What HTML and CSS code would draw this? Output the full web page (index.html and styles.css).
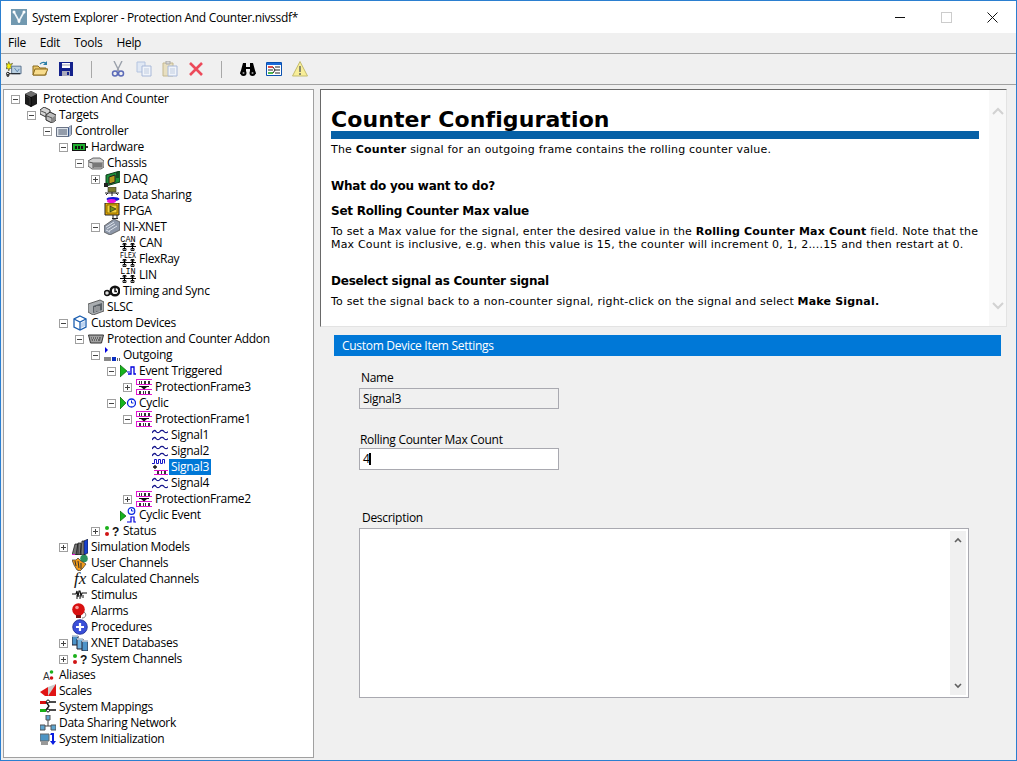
FILE: index.html
```html
<!DOCTYPE html>
<html lang="en">
<head>
    <meta charset="UTF-8" />
    <title>System Explorer - Protection And Counter.nivssdf*</title>
    <link rel="stylesheet" href="styles.css">
</head>
<body>
<svg class="defs" width="0" height="0">
    <symbol id="i-root" viewBox="0 0 16 16">
        <path d="M1 3l6-3 6 3v10l-6 3-6-3z" fill="#1c1c1c"/><path d="M1 3l6-3 6 3-6 3z" fill="#6e6e6e"/><path d="M7 6v10" stroke="#000"/><path d="M2 5l4 2v7" stroke="#3a3a3a" fill="none"/>
    </symbol>
    <symbol id="i-targets" viewBox="0 0 16 16">
        <path d="M0 3l4-3 6 3v5l-4 2-6-3z" fill="#d4d4d4" stroke="#333"/><path d="M6 8l4-3 6 3v5l-4 3-6-3z" fill="#bdbdbd" stroke="#222"/><path d="M1 4l5 2v4M7 9l5 2v5" stroke="#555" fill="none"/><path d="M12 11l4-3v5l-4 3z" fill="#888"/>
    </symbol>
    <symbol id="i-controller" viewBox="0 0 16 16">
        <path d="M.5 4.500h12l3-2v9l-3 2H.5z" fill="#dde3ea" stroke="#6a7385"/><path d="M2 7h9M2 9h9M2 11h9M4 6v6M6 6v6M8 6v6M10 6v6" stroke="#7b8494"/><path d="M12.500 4.500v9" stroke="#3d5a8a"/><path d="M13 5l2-2v8l-2 2z" fill="#a9b8d0"/>
    </symbol>
    <symbol id="i-hardware" viewBox="0 0 16 16">
        <path d="M0 4h14v8H0z" fill="#111"/><path d="M1 5h12v6H1z" fill="#1fae2f"/><path d="M3 7h2v3H3zM6 7h2v3H6zM9 7h2v3H9z" fill="#111"/><path d="M14 7h2v2h-2z" fill="#333"/>
    </symbol>
    <symbol id="i-chassis" viewBox="0 0 16 16">
        <path d="M0 6l5-3h7l4 3v6l-3 2H4l-4-3z" fill="#cfcfcf" stroke="#444" stroke-width=".8"/><path d="M5 7h10v6H5z" fill="#9b9b9b"/><path d="M1 7l4 1v5M6 9h8M6 11h8" stroke="#555" fill="none"/>
    </symbol>
    <symbol id="i-daq" viewBox="0 0 16 16">
        <path d="M2 4l14-4v11L2 15z" fill="#1c8f3a" stroke="#0b3d19"/><path d="M5 6l6-2v7l-6 2z" fill="#b89a1a" stroke="#222"/><path d="M0 12h4v4H0z" fill="#222"/><path d="M12 2h3M12 4h3M12 6h3" stroke="#111"/>
    </symbol>
    <symbol id="i-share" viewBox="0 0 16 16">
        <path d="M4 0h8v5H4z" fill="#7d7d30" stroke="#333" stroke-width=".6"/><path d="M1 6h14M8 5v4M4 6L2 8M12 6l2 2" stroke="#222"/><ellipse cx="9" cy="12" rx="6.500" ry="2" fill="#1515d8"/><ellipse cx="7.500" cy="14" rx="4.500" ry="2" fill="#ee18d6"/>
    </symbol>
    <symbol id="i-fpga" viewBox="0 0 16 16">
        <path d="M1 0h14v12H1z" fill="#e8a800" stroke="#222"/><path d="M3 2h10v8H3z" fill="#f6d23c" stroke="#8a6d00"/><path d="M6 3l6 3-6 3z" fill="#6f8f1e" stroke="#111" stroke-width=".6"/><path d="M9 12v3M13 12v3M8 15.500h6" stroke="#222"/>
    </symbol>
    <symbol id="i-xnet" viewBox="0 0 16 16">
        <path d="M0 7l10-7 6 3v8L6 16l-6-3z" fill="#8d97a8" stroke="#444" stroke-width=".7"/><path d="M2 8l8-5M3 10l8-5M5 12l8-5M2 11l4 2" stroke="#dce2ea"/>
    </symbol>
    <symbol id="i-bus" viewBox="0 0 16 8">
        <path d="M0 3.500h16M4.500 .5v6M12.500 .5v6" stroke="#000"/><path d="M3 5.500h3v2H3zM11 5.500h3v2h-3zM3 .5h3v1.500H3zM11 .5h3v1.500h-3z" fill="none" stroke="#000" stroke-width=".9"/>
    </symbol>
    <symbol id="i-timing" viewBox="0 0 16 16">
        <circle cx="3" cy="10" r="2.500" fill="#ddd" stroke="#111" stroke-width="1.500"/><circle cx="11" cy="8" r="4.300" fill="#fff" stroke="#111" stroke-width="2.400"/><path d="M11 5v3.500h2M5 11h3" stroke="#111" stroke-width="1.400" fill="none"/>
    </symbol>
    <symbol id="i-slsc" viewBox="0 0 16 16">
        <path d="M0 5l12-4 4 2v9l-11 4-5-3z" fill="#a9adb0" stroke="#444" stroke-width=".8"/><path d="M5 7l9-3v7l-9 3z" fill="#5a6066"/><path d="M7 8v5M9 7v5M11 7v5" stroke="#ccc"/>
    </symbol>
    <symbol id="i-custom" viewBox="0 0 16 16">
        <path d="M8 1l6 3v8l-6 3-6-3V4z" fill="#fff" stroke="#1c5fb0" stroke-width="1.300"/><path d="M2 4l6 3 6-3M8 7v8" fill="none" stroke="#1c5fb0" stroke-width="1.300"/><path d="M9 8l4-2v5l-4 2z" fill="#bcd3f0"/>
    </symbol>
    <symbol id="i-addon" viewBox="0 0 16 16">
        <path d="M.5 4h15l-2 8h-11z" fill="#a0a0a0" stroke="#333"/><path d="M3 6h10l-1 4H4z" fill="#666"/><path d="M4 7h1M6 7h1M8 7h1M10 7h1M5 9h1M7 9h1M9 9h1" stroke="#eee"/>
    </symbol>
    <symbol id="i-out" viewBox="0 0 16 16">
        <path d="M1 0l3 3-3 3z" fill="#0000e0"/><path d="M0 11h7M0 13h7" stroke="#111" stroke-width="1.200"/><path d="M8 10h4v4H8z" fill="#0a2fc0"/><path d="M13 11h1v3h-1zM15 11h1v3h-1z" fill="#666"/>
    </symbol>
    <symbol id="i-event" viewBox="0 0 16 16">
        <path d="M0 2l7 6-7 6z" fill="#17b41d" stroke="#0a5c0a" stroke-width=".7"/><path d="M8 11h3V4h3v7h2" fill="none" stroke="#0000dd" stroke-width="1.300"/><path d="M7 9h3" stroke="#0000dd"/>
    </symbol>
    <symbol id="i-cyclic" viewBox="0 0 16 16">
        <path d="M0 2l6 6-6 6z" fill="#17b41d" stroke="#0a5c0a" stroke-width=".7"/><circle cx="11.500" cy="8" r="4" fill="#fff" stroke="#0a28e0" stroke-width="1.300"/><path d="M11.500 5.500V8h2" fill="none" stroke="#0a28e0"/>
    </symbol>
    <symbol id="i-cyevent" viewBox="0 0 16 16">
        <path d="M0 4l6 5-6 5z" fill="#17b41d" stroke="#0a5c0a" stroke-width=".7"/><circle cx="11.500" cy="4" r="3.300" fill="#fff" stroke="#0a28e0" stroke-width="1.200"/><path d="M11.500 2v2h2" fill="none" stroke="#0a28e0"/><path d="M7 15h4v-5h3v5h2" fill="none" stroke="#0000dd" stroke-width="1.200"/>
    </symbol>
    <symbol id="i-frame" viewBox="0 0 16 16">
        <path d="M0 .5h16M0 5.500h16M0 10.500h16M0 15.500h16M.5 0v6M.5 10v6" stroke="#e014d0"/><path d="M3 2h1v3H3zM5 2h1v3H5zM8 2h2v3H8zM12 2h2v3h-2zM3 12h2v3H3zM7 12h1v3H7zM9 12h1v3H9zM12 12h2v3h-2z" fill="#333"/><path d="M5 8h6l-3 2.500z" fill="#111"/><path d="M3 7.500h10" stroke="#111"/>
    </symbol>
    <symbol id="i-signal" viewBox="0 0 16 16">
        <path d="M0 6c1.500-3 3-3 4-1.500S7 6 8 4.500 11 3 12 4.500 15 6 16 4.500M0 13c1.500-3 3-3 4-1.500S7 13 8 11.500 11 10 12 11.500 15 13 16 11.500" fill="none" stroke="#14148c" stroke-width="1.300"/>
    </symbol>
    <symbol id="i-counter" viewBox="0 0 16 16">
        <path d="M0 4.500h2.500v-4h2v4h2v-4h2v4h2v-4h2v4" fill="none" stroke="#1414c8"/><path d="M3 6v4M1 8h4" stroke="#111" stroke-width="1.300"/><path d="M2 11.500h14M2 15.500h14" stroke="#e014d0"/><path d="M5 12h2v3H5zM9 12h1v3H9zM12 12h2v3h-2z" fill="#333"/>
    </symbol>
    <symbol id="i-models" viewBox="0 0 16 16">
        <path d="M0 16l3-11h3v11zM4 16l2-12h3v12zM8 16l2-14h3v14z" fill="#777" stroke="#111" stroke-width=".7"/><path d="M12 16V2l4-2v14z" fill="#1640d0" stroke="#111" stroke-width=".6"/><path d="M0 15h3v1H0z" fill="#e014d0"/>
    </symbol>
    <symbol id="i-users" viewBox="0 0 16 16">
        <circle cx="12" cy="3.500" r="3.800" fill="#2a8f5c"/><path d="M0 5l4 0 2-2 3 3 2 1 3 2-3 4-3 3-3-1-3-5z" fill="#f09a1a" stroke="#333" stroke-width=".7"/><path d="M3 6l1 5M6 6l1 7M9 8l0 6" stroke="#333"/>
    </symbol>
    <symbol id="i-stim" viewBox="0 0 16 16">
        <path d="M0 7h4l1-3 1 6 1-6h1l1 5 1-3h5" fill="none" stroke="#111" stroke-width="1.200"/><path d="M5 8v4M8 8v4M11 8v3" stroke="#111"/>
    </symbol>
    <symbol id="i-alarm" viewBox="0 0 16 16">
        <circle cx="6.500" cy="6.500" r="6.300" fill="#d81010"/><circle cx="5" cy="4.500" r="1.800" fill="#f79a9a"/><path d="M4 12h5v3H4z" fill="#7a1010"/><path d="M12 9c3 2 2 6-2 6" fill="none" stroke="#777"/>
    </symbol>
    <symbol id="i-proc" viewBox="0 0 16 16">
        <circle cx="8" cy="8" r="7.300" fill="#3a4fd8" stroke="#1b2a90" stroke-width=".8"/><path d="M8 4v8M4 8h8" stroke="#fff" stroke-width="2.200"/>
    </symbol>
    <symbol id="i-db" viewBox="0 0 16 16">
        <path d="M0 1h6v9H0z" fill="#4c93c9" stroke="#223"/><path d="M5 4h6v10H5z" fill="#6fb2e0" stroke="#223"/><path d="M10 6h6v10h-6z" fill="#4c93c9" stroke="#223"/><path d="M0 1h6M5 4h6M10 6h6" stroke="#cde" stroke-width="1.500"/>
    </symbol>
    <symbol id="i-scale" viewBox="0 0 16 16">
        <path d="M0 9l8-5v9H5z" fill="#e01414"/><path d="M8 4l8-3v12H8z" fill="#ccc"/><path d="M8 13l8-12v12z" fill="#e01414"/>
    </symbol>
    <symbol id="i-map" viewBox="0 0 16 16">
        <path d="M0 2h6v3H0z" fill="#d81010"/><path d="M0 10h6v3H0z" fill="#18b018"/><path d="M9 3h7M9 11h7M6 3l3 4-3 4" fill="none" stroke="#111" stroke-width="1.300"/><circle cx="8" cy="2.500" r="1.500" fill="#fff" stroke="#111"/><circle cx="8" cy="11.500" r="1.500" fill="#fff" stroke="#111"/>
    </symbol>
    <symbol id="i-net" viewBox="0 0 16 16">
        <path d="M6 0h4v5H6z" fill="#5ea5d0" stroke="#555"/><path d="M8 5v6M2 11h12" stroke="#444"/><path d="M0 10h5v5H0zM11 10h5v5h-5z" fill="#5ea5d0" stroke="#555"/>
    </symbol>
    <symbol id="i-init" viewBox="0 0 16 16">
        <path d="M0 3h9v7H0z" fill="#4d94c4" stroke="#666"/><path d="M1 10h7v4H1z" fill="#999"/><path d="M11 2h3v8h2l-3 4-3-4h2V4h-2z" fill="#0a1ee0"/>
    </symbol>
    <symbol id="t-new" viewBox="0 0 17 16">
        <path d="M3 0l1 3 3-1-2 3 2 3-3-1-1 3-1-3-2 1 1-3-1-3 2 1z" fill="#f7f010" stroke="#111" stroke-width=".5"/><path d="M6 5h10v8H6z" fill="#b9cfe0" stroke="#58708c"/><path d="M9 7l3 4 2-3" fill="none" stroke="#5f86ad"/><circle cx="2" cy="13" r="1.500" fill="none" stroke="#111"/><circle cx="2" cy="15" r="1" fill="none" stroke="#111"/><path d="M3 13h12" stroke="#111"/>
    </symbol>
    <symbol id="t-open" viewBox="0 0 16 16">
        <path d="M1 5h5l2 2h6v7H1z" fill="#e9c66a" stroke="#8a6a1c"/><path d="M1 14l2-6h13l-3 6z" fill="#f8dc8c" stroke="#8a6a1c"/><path d="M8 3c2-2 4-2 6-1" fill="none" stroke="#2c7fa8" stroke-width="1.200"/><path d="M15 0v4h-4z" fill="#2c7fa8"/>
    </symbol>
    <symbol id="t-save" viewBox="0 0 16 16">
        <path d="M1 1h14v14H1z" fill="#14228c"/><path d="M4 2h8v5H4z" fill="#fff"/><path d="M4 10h8v5H4z" fill="#aab"/><path d="M9 11h2v3H9z" fill="#14228c"/><path d="M4 4h8" stroke="#99a"/>
    </symbol>
    <symbol id="t-cut" viewBox="0 0 16 16">
        <path d="M4 0l5 10M12 0L7 10" stroke="#9aa0aa" stroke-width="1.400"/><circle cx="5" cy="12.500" r="2.500" fill="none" stroke="#5c6bb8" stroke-width="1.500"/><circle cx="11" cy="12.500" r="2.500" fill="none" stroke="#5c6bb8" stroke-width="1.500"/>
    </symbol>
    <symbol id="t-copy" viewBox="0 0 16 16">
        <path d="M1 1h8v10H1z" fill="#e0e8f4" stroke="#b4c4e0"/><path d="M6 5h9v10H6z" fill="#f0f4fa" stroke="#a8b8d8"/><path d="M8 8h5M8 10h5M8 12h5" stroke="#c0cce0"/>
    </symbol>
    <symbol id="t-paste" viewBox="0 0 16 16">
        <path d="M1 2h10v13H1z" fill="#e8dfc0" stroke="#c4b890"/><path d="M4 0h4v3H4z" fill="#d8d8d8" stroke="#aaa"/><path d="M6 5h9v10H6z" fill="#f0f4fa" stroke="#a8b8d8"/><path d="M8 8h5M8 10h5M8 12h5" stroke="#c0cce0"/>
    </symbol>
    <symbol id="t-del" viewBox="0 0 16 16">
        <path d="M2 2l12 12M14 2L2 14" stroke="#ec4a5a" stroke-width="2.600"/>
    </symbol>
    <symbol id="t-find" viewBox="0 0 16 16">
        <path d="M3 2h3v4h4V2h3l3 11h-6V8H6v5H0z" fill="#000"/><circle cx="3.500" cy="12" r="3" fill="#000"/><circle cx="12.500" cy="12" r="3" fill="#000"/><circle cx="3.500" cy="12" r="1" fill="#999"/><circle cx="12.500" cy="12" r="1" fill="#999"/>
    </symbol>
    <symbol id="t-list" viewBox="0 0 16 16">
        <path d="M.5 1.500h15v13H.5z" fill="#fff" stroke="#0a50b0"/><path d="M1 2h14v2H1z" fill="#1a6ad8"/><path d="M2 6h5" stroke="#d01414" stroke-width="1.500"/><path d="M2 9h5M9 6h5M9 9h5M9 12h5" stroke="#222" stroke-width="1.200"/><path d="M2 12h5" stroke="#14a014" stroke-width="1.500"/><path d="M7 6l2 3-2 3" fill="none" stroke="#222"/>
    </symbol>
    <symbol id="t-warn" viewBox="0 0 16 16">
        <path d="M8 .5L15.500 15H.5z" fill="#f8ee98" stroke="#c4bc70"/><path d="M7 5h2v6H7zM7 12h2v2H7z" fill="#8a8a70"/>
    </symbol>
</svg>

<div class="window">
    <div class="titlebar">
        <svg class="appicon" viewBox="0 0 16 16"><path d="M0 0h16v16H0z" fill="#7299b0"/><path d="M3 3l5 9 5-9M8 12v2" fill="none" stroke="#eef4f8" stroke-width="1.600"/><circle cx="3" cy="3" r="1.500" fill="#fff"/><circle cx="13" cy="3" r="1.500" fill="#fff"/><circle cx="8" cy="12" r="1.500" fill="#fff"/></svg>
        <span class="title">System Explorer - Protection And Counter.nivssdf*</span>
        <div class="winbtns">
            <span class="winbtn"><span class="win-min"></span></span>
            <span class="winbtn"><span class="win-max"></span></span>
            <span class="winbtn"><svg class="win-close" viewBox="0 0 11 11"><path d="M.5.5l10 10M10.500.5l-10 10" stroke="#111" fill="none"/></svg></span>
        </div>
    </div>
    <div class="menubar">
        <span class="menu">File</span>
        <span class="menu">Edit</span>
        <span class="menu">Tools</span>
        <span class="menu">Help</span>
    </div>
    <div class="toolbar">
        <svg class="tool"><use href="#t-new"/></svg>
        <svg class="tool"><use href="#t-open"/></svg>
        <svg class="tool"><use href="#t-save"/></svg>
        <span class="sep"></span>
        <svg class="tool"><use href="#t-cut"/></svg>
        <svg class="tool"><use href="#t-copy"/></svg>
        <svg class="tool"><use href="#t-paste"/></svg>
        <svg class="tool"><use href="#t-del"/></svg>
        <span class="sep"></span>
        <svg class="tool"><use href="#t-find"/></svg>
        <svg class="tool"><use href="#t-list"/></svg>
        <svg class="tool"><use href="#t-warn"/></svg>
    </div>

    <div class="main">
        <div class="tree">
            <div class="row l0"><span class="exp minus"></span><svg class="ico"><use href="#i-root"/></svg><span class="lbl">Protection And Counter</span></div>
            <div class="row l1"><span class="exp minus"></span><svg class="ico"><use href="#i-targets"/></svg><span class="lbl">Targets</span></div>
            <div class="row l2"><span class="exp minus"></span><svg class="ico"><use href="#i-controller"/></svg><span class="lbl">Controller</span></div>
            <div class="row l3"><span class="exp minus"></span><svg class="ico"><use href="#i-hardware"/></svg><span class="lbl">Hardware</span></div>
            <div class="row l4"><span class="exp minus"></span><svg class="ico"><use href="#i-chassis"/></svg><span class="lbl">Chassis</span></div>
            <div class="row l5"><span class="exp plus"></span><svg class="ico"><use href="#i-daq"/></svg><span class="lbl">DAQ</span></div>
            <div class="row l5"><span class="exp none"></span><svg class="ico"><use href="#i-share"/></svg><span class="lbl">Data Sharing</span></div>
            <div class="row l5"><span class="exp none"></span><svg class="ico"><use href="#i-fpga"/></svg><span class="lbl">FPGA</span></div>
            <div class="row l5"><span class="exp minus"></span><svg class="ico"><use href="#i-xnet"/></svg><span class="lbl">NI-XNET</span></div>
            <div class="row l6"><span class="exp none"></span><svg class="ico" viewBox="0 0 16 16"><text x="8" y="6.500" class="svg-bus">CAN</text><use href="#i-bus" y="8" width="16" height="8"/></svg><span class="lbl">CAN</span></div>
            <div class="row l6"><span class="exp none"></span><svg class="ico" viewBox="0 0 16 16"><text x="0" y="6.500" class="svg-flex" textLength="16" lengthAdjust="spacingAndGlyphs">FLEX</text><use href="#i-bus" y="8" width="16" height="8"/></svg><span class="lbl">FlexRay</span></div>
            <div class="row l6"><span class="exp none"></span><svg class="ico" viewBox="0 0 16 16"><text x="8" y="6.500" class="svg-bus">LIN</text><use href="#i-bus" y="8" width="16" height="8"/></svg><span class="lbl">LIN</span></div>
            <div class="row l5"><span class="exp none"></span><svg class="ico"><use href="#i-timing"/></svg><span class="lbl">Timing and Sync</span></div>
            <div class="row l4"><span class="exp none"></span><svg class="ico"><use href="#i-slsc"/></svg><span class="lbl">SLSC</span></div>
            <div class="row l3"><span class="exp minus"></span><svg class="ico"><use href="#i-custom"/></svg><span class="lbl">Custom Devices</span></div>
            <div class="row l4"><span class="exp minus"></span><svg class="ico"><use href="#i-addon"/></svg><span class="lbl">Protection and Counter Addon</span></div>
            <div class="row l5"><span class="exp minus"></span><svg class="ico"><use href="#i-out"/></svg><span class="lbl">Outgoing</span></div>
            <div class="row l6"><span class="exp minus"></span><svg class="ico"><use href="#i-event"/></svg><span class="lbl">Event Triggered</span></div>
            <div class="row l7"><span class="exp plus"></span><svg class="ico"><use href="#i-frame"/></svg><span class="lbl">ProtectionFrame3</span></div>
            <div class="row l6"><span class="exp minus"></span><svg class="ico"><use href="#i-cyclic"/></svg><span class="lbl">Cyclic</span></div>
            <div class="row l7"><span class="exp minus"></span><svg class="ico"><use href="#i-frame"/></svg><span class="lbl">ProtectionFrame1</span></div>
            <div class="row l8"><span class="exp none"></span><svg class="ico"><use href="#i-signal"/></svg><span class="lbl">Signal1</span></div>
            <div class="row l8"><span class="exp none"></span><svg class="ico"><use href="#i-signal"/></svg><span class="lbl">Signal2</span></div>
            <div class="row l8"><span class="exp none"></span><svg class="ico"><use href="#i-counter"/></svg><span class="lbl selected">Signal3</span></div>
            <div class="row l8"><span class="exp none"></span><svg class="ico"><use href="#i-signal"/></svg><span class="lbl">Signal4</span></div>
            <div class="row l7"><span class="exp plus"></span><svg class="ico"><use href="#i-frame"/></svg><span class="lbl">ProtectionFrame2</span></div>
            <div class="row l6"><span class="exp none"></span><svg class="ico"><use href="#i-cyevent"/></svg><span class="lbl">Cyclic Event</span></div>
            <div class="row l5"><span class="exp plus"></span><svg class="ico" viewBox="0 0 16 16"><circle cx="3" cy="5" r="2" fill="#1bb01b"/><circle cx="3" cy="11" r="2" fill="#d01414"/><text x="8" y="13" class="svg-q">?</text></svg><span class="lbl">Status</span></div>
            <div class="row l3"><span class="exp plus"></span><svg class="ico"><use href="#i-models"/></svg><span class="lbl">Simulation Models</span></div>
            <div class="row l3"><span class="exp none"></span><svg class="ico"><use href="#i-users"/></svg><span class="lbl">User Channels</span></div>
            <div class="row l3"><span class="exp none"></span><svg class="ico" viewBox="0 0 16 16"><text x="2" y="13" class="svg-fx">fx</text></svg><span class="lbl">Calculated Channels</span></div>
            <div class="row l3"><span class="exp none"></span><svg class="ico"><use href="#i-stim"/></svg><span class="lbl">Stimulus</span></div>
            <div class="row l3"><span class="exp none"></span><svg class="ico"><use href="#i-alarm"/></svg><span class="lbl">Alarms</span></div>
            <div class="row l3"><span class="exp none"></span><svg class="ico"><use href="#i-proc"/></svg><span class="lbl">Procedures</span></div>
            <div class="row l3"><span class="exp plus"></span><svg class="ico"><use href="#i-db"/></svg><span class="lbl">XNET Databases</span></div>
            <div class="row l3"><span class="exp plus"></span><svg class="ico" viewBox="0 0 16 16"><circle cx="3" cy="5" r="2" fill="#1bb01b"/><circle cx="3" cy="11" r="2" fill="#d01414"/><text x="8" y="13" class="svg-q">?</text></svg><span class="lbl">System Channels</span></div>
            <div class="row l1"><span class="exp none"></span><svg class="ico" viewBox="0 0 16 16"><text x="3" y="13" class="svg-a">A</text><circle cx="11.500" cy="5" r="1.800" fill="#1bb01b"/><circle cx="11.500" cy="11" r="1.800" fill="#d01414"/></svg><span class="lbl">Aliases</span></div>
            <div class="row l1"><span class="exp none"></span><svg class="ico"><use href="#i-scale"/></svg><span class="lbl">Scales</span></div>
            <div class="row l1"><span class="exp none"></span><svg class="ico"><use href="#i-map"/></svg><span class="lbl">System Mappings</span></div>
            <div class="row l1"><span class="exp none"></span><svg class="ico"><use href="#i-net"/></svg><span class="lbl">Data Sharing Network</span></div>
            <div class="row l1"><span class="exp none"></span><svg class="ico"><use href="#i-init"/></svg><span class="lbl">System Initialization</span></div>
        </div>

        <div class="content">
            <div class="help">
                <div class="help-body">
                    <h1>Counter Configuration</h1>
                    <p class="intro">The <b>Counter</b> signal for an outgoing frame contains the rolling counter value.</p>
                    <h2 class="ask">What do you want to do?</h2>
                    <h2 class="topic">Set Rolling Counter Max value</h2>
                    <p>To set a Max value for the signal, enter the desired value in the <b>Rolling Counter Max Count</b> field. Note that the<br>Max Count is inclusive, e.g. when this value is 15, the counter will increment 0, 1, 2....15 and then restart at 0.</p>
                    <h2 class="topic2">Deselect signal as Counter signal</h2>
                    <p>To set the signal back to a non-counter signal, right-click on the signal and select <b>Make Signal.</b></p>
                </div>
                <div class="help-scroll">
                    <svg class="chev" viewBox="0 0 12 8"><path d="M1 7l5-5 5 5" fill="none" stroke="#d2d2d2" stroke-width="2"/></svg>
                    <svg class="chev" viewBox="0 0 12 8"><path d="M1 1l5 5 5-5" fill="none" stroke="#d2d2d2" stroke-width="2"/></svg>
                </div>
            </div>
            <div class="section">Custom Device Item Settings</div>
            <div class="form">
                <label class="lab-name">Name</label>
                <div class="field readonly">Signal3</div>
                <label class="lab-count">Rolling Counter Max Count</label>
                <div class="field editing">4<span class="caret"></span></div>
                <label class="lab-desc">Description</label>
                <div class="textarea">
                    <div class="ta-scroll">
                        <svg class="ta-chev" viewBox="0 0 8 6"><path d="M1 5l3-3 3 3" fill="none" stroke="#606060" stroke-width="1.600"/></svg>
                        <svg class="ta-chev" viewBox="0 0 8 6"><path d="M1 1l3 3 3-3" fill="none" stroke="#606060" stroke-width="1.600"/></svg>
                    </div>
                </div>
            </div>
        </div>
    </div>
</div>
</body>
</html>
```

FILE: styles.css
```css
* {
    box-sizing: border-box;
}

html, body {
    margin: 0;
    padding: 0;
    background: #f0f0f0;
}

.defs {
    position: absolute;
}

/* Text inside the small icons */
.svg-q {
    font: bold 12px "Liberation Sans", sans-serif;
    letter-spacing: 0;
    fill: #111;
}

.svg-fx {
    font: italic 17px "Liberation Serif", serif;
    letter-spacing: 0;
    fill: #111;
}

.svg-a {
    font: 10px "Liberation Sans", sans-serif;
    letter-spacing: 0;
    fill: #333;
}

.svg-bus {
    font: 8.500px "Liberation Mono", monospace;
    letter-spacing: 0;
    fill: #000;
    text-anchor: middle;
}

.svg-flex {
    font: 8.500px "Liberation Mono", monospace;
    letter-spacing: 0;
    fill: #000;
}

/* Window frame */
.window {
    width: 1017px;
    height: 761px;
    border: 1px solid #2b7fd0;
    display: flex;
    flex-direction: column;
    font: 12px "Open Sans", sans-serif;
    letter-spacing: -0.29px;
    color: #000;
    overflow: hidden;
}

.titlebar {
    height: 32px;
    background: #fff;
    display: flex;
    align-items: center;
    padding-left: 10px;
    flex: none;
}

.appicon {
    width: 16px;
    height: 16px;
    margin-right: 5px;
}

.title {
    flex: 1;
    letter-spacing: -0.32px;
}

.winbtns {
    display: flex;
    margin-right: 1px;
}

.winbtn {
    width: 46px;
    height: 30px;
    display: flex;
    align-items: center;
    justify-content: center;
}

.win-min {
    width: 10px;
    height: 1px;
    background: #111;
}

.win-max {
    width: 11px;
    height: 11px;
    border: 1px solid #ccc;
}

.win-close {
    width: 11px;
    height: 11px;
}

.menubar {
    height: 21px;
    flex: none;
    border-bottom: 1px solid #a0a0a0;
    display: flex;
    align-items: center;
    padding: 0 0 2px 7px;
    gap: 14px;
}

.toolbar {
    height: 31px;
    flex: none;
    border-bottom: 1px solid #a0a0a0;
    display: flex;
    align-items: center;
    padding-left: 5px;
    gap: 10px;
}

.tool {
    width: 16px;
    height: 16px;
}

.sep {
    width: 1px;
    height: 17px;
    background: #a8a8a8;
    margin: 0 8px 0 7px;
}

.main {
    flex: 1;
    display: flex;
    padding: 4px 0 2px 2px;
    min-height: 0;
}

/* Tree on the left */
.tree {
    width: 311px;
    background: #fff;
    border: 1px solid #a0a0a0;
    padding-top: 1px;
    flex: none;
}

.row {
    height: 16px;
    display: flex;
    align-items: center;
    white-space: nowrap;
}

.l0 { padding-left: 7px; }
.l1 { padding-left: 23px; }
.l2 { padding-left: 39px; }
.l3 { padding-left: 55px; }
.l4 { padding-left: 71px; }
.l5 { padding-left: 87px; }
.l6 { padding-left: 103px; }
.l7 { padding-left: 119px; }
.l8 { padding-left: 135px; }

.exp {
    width: 9px;
    height: 9px;
    margin-right: 4px;
    border: 1px solid #a0a0a0;
    background: #fff;
    position: relative;
    flex: none;
}

.exp.none {
    visibility: hidden;
}

.exp::before {
    content: "";
    position: absolute;
    left: 1px;
    top: 3px;
    width: 5px;
    height: 1px;
    background: #444;
}

.plus::after {
    content: "";
    position: absolute;
    left: 3px;
    top: 1px;
    width: 1px;
    height: 5px;
    background: #444;
}

.ico {
    width: 16px;
    height: 16px;
    flex: none;
    overflow: visible;
}

.lbl {
    margin-left: 1px;
    padding: 0 2px;
    height: 16px;
    line-height: 15px;
}

.selected {
    background: #0078d7;
    color: #fff;
}

/* Right side */
.content {
    flex: none;
    width: 687px;
    margin-left: 6px;
}

.help {
    height: 238px;
    display: flex;
    background: #fff;
    border: 1px solid #e3e3e3;
    border-top-color: #696969;
    border-left-color: #696969;
}

.help-body {
    flex: 1;
    padding: 16px 10px 0 10px;
    font: 11px/13px "DejaVu Sans", sans-serif;
    letter-spacing: 0.19px;
}

.help-scroll {
    width: 17px;
    background: #f8f8f8;
    display: flex;
    flex-direction: column;
    justify-content: space-between;
    align-items: center;
    padding: 17px 0 16px;
}

.chev {
    width: 12px;
    height: 8px;
}

h1 {
    margin: 0;
    padding-top: 2px;
    font: bold 22px/23px "DejaVu Sans", sans-serif;
    letter-spacing: 0.1px;
    border-bottom: 8px solid #0660a6;
}

h2 {
    margin: 0;
    font: bold 12px/15px "DejaVu Sans", sans-serif;
    letter-spacing: -0.23px;
}

p {
    margin: 0;
}

.intro {
    margin-top: 4px;
}

.ask {
    margin-top: 23px;
}

.topic {
    margin-top: 10px;
    margin-bottom: 6px;
}

.topic2 {
    margin-top: 23px;
    margin-bottom: 6px;
}

.section {
    margin: 8px 6px 0 14px;
    height: 21px;
    line-height: 21px;
    background: #0078d7;
    color: #fff;
    padding-left: 8px;
}

.form {
    padding: 14px 0 0 39px;
}

.form label {
    display: block;
    line-height: 16px;
}

.lab-name {
    padding-left: 2px;
}

.lab-count {
    margin-top: 23px;
    padding-left: 1px;
}

.lab-desc {
    margin-top: 40px;
    padding-left: 3px;
}

.field {
    width: 200px;
    height: 21px;
    border: 1px solid #a9a9b0;
    line-height: 19px;
    padding-left: 3px;
    margin-top: 2px;
}

.readonly {
    background: #f0f0f0;
}

.editing {
    height: 22px;
    background: #fff;
    padding-left: 3px;
    margin-top: 0;
}

.caret {
    display: inline-block;
    width: 2px;
    height: 12px;
    background: #000;
    margin-left: -1px;
    vertical-align: -2px;
}

.textarea {
    width: 610px;
    height: 170px;
    margin-top: 2px;
    border: 1px solid #a9a9b0;
    background: #fff;
    display: flex;
    justify-content: flex-end;
    padding: 2px 2px 2px 0;
}

.ta-scroll {
    width: 16px;
    background: #f0f0f0;
    display: flex;
    flex-direction: column;
    justify-content: space-between;
    align-items: center;
    padding: 6px 0;
}

.ta-chev {
    width: 8px;
    height: 6px;
}
```
